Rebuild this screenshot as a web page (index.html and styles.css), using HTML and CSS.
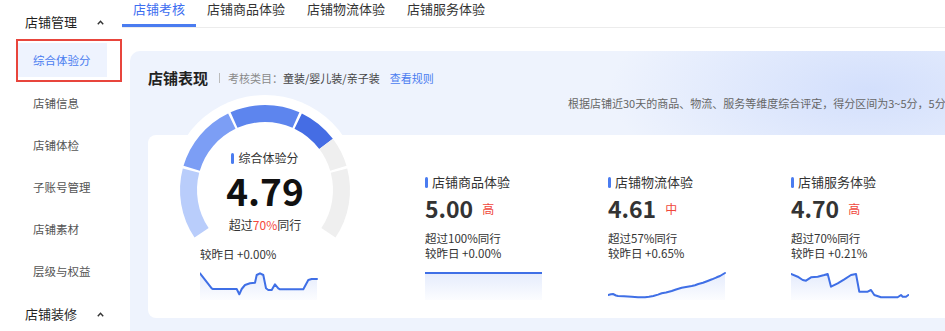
FILE: index.html
```html
<!DOCTYPE html>
<html lang="zh-CN">
<head>
<meta charset="utf-8">
<title>店铺考核</title>
<link rel="stylesheet" href="styles.css">
</head>
<body>
<aside class="sidebar">
  <div class="nav-group">店铺管理<svg class="caret" width="7" height="5" viewBox="0 0 7 5"><path d="M0.8 4.2 L3.5 1.2 L6.2 4.2" fill="none" stroke="#333" stroke-width="1.4"/></svg></div>
  <div class="nav-frame"><div class="nav-item active">综合体验分</div></div>
  <div class="nav-item">店铺信息</div>
  <div class="nav-item">店铺体检</div>
  <div class="nav-item">子账号管理</div>
  <div class="nav-item">店铺素材</div>
  <div class="nav-item">层级与权益</div>
  <div class="nav-group">店铺装修<svg class="caret" width="7" height="5" viewBox="0 0 7 5"><path d="M0.8 4.2 L3.5 1.2 L6.2 4.2" fill="none" stroke="#333" stroke-width="1.4"/></svg></div>
</aside>
<main class="main">
  <nav class="tabs">
    <div class="tab active">店铺考核</div>
    <div class="tab">店铺商品体验</div>
    <div class="tab">店铺物流体验</div>
    <div class="tab">店铺服务体验</div>
  </nav>
  <section class="panel">
    <div class="panel-head">
      <span class="panel-title">店铺表现</span>
      <span class="sep"></span>
      <span class="meta">考核类目：<span class="meta-val">童装/婴儿装/亲子装</span></span>
      <span class="rule-link">查看规则</span>
    </div>
    <div class="desc">根据店铺近30天的商品、物流、服务等维度综合评定，得分区间为3~5分，5分为满分</div>
    <div class="card">
      <div class="gauge-col">
        <div class="gauge-wrap">
          <svg width="190" height="150" viewBox="0 0 190 150">
            <circle cx="95" cy="95" r="95" fill="#fff"/>
            <g fill="none" stroke-width="17">
              <path d="M31.58 137.78 A76.5 76.5 0 0 1 21.0 75.59" stroke="#b9cdfb"/>
              <path d="M21.65 73.27 A76.5 76.5 0 0 1 61.82 26.07" stroke="#7c9ef5"/>
              <path d="M64.01 25.06 A76.5 76.5 0 0 1 125.99 25.06" stroke="#5d85ee"/>
              <path d="M128.18 26.07 A76.5 76.5 0 0 1 156.09 48.96" stroke="#456de4"/>
              <path d="M156.09 48.96 A76.5 76.5 0 0 1 168.35 73.27" stroke="#efefef"/>
              <path d="M169.0 75.59 A76.5 76.5 0 0 1 158.42 137.78" stroke="#efefef"/>
            </g>
          </svg>
          <div class="gauge-text">
            <div class="gauge-label">综合体验分</div>
            <div class="gauge-num">4.79</div>
            <div class="gauge-sub">超过<span class="red">70%</span>同行</div>
          </div>
        </div>
        <div class="gauge-foot">
          <div class="delta">较昨日 +0.00%</div>
          <svg class="spark" width="118" height="32" viewBox="0 0 118 32">
            <defs><linearGradient id="g0" x1="0" y1="0" x2="0" y2="1"><stop offset="0" stop-color="#5b86ee" stop-opacity="0.16"/><stop offset="1" stop-color="#5b86ee" stop-opacity="0.02"/></linearGradient></defs>
            <path d="M0 5.3 L11.7 20.3 L13 21 L36.7 21 L39.3 26.3 L41.7 21 L45 17 L50 15.3 L55 14.7 L56.7 7 L60 5.3 L63.3 7 L66 20.3 L68.3 22 L71.7 22 L75 16.3 L78.3 20.3 L80 21.3 L103.3 21.3 L108.3 12 L111.7 11 L117 11 L117 32 L0 32 Z" fill="url(#g0)"/>
            <path d="M0 5.3 L11.7 20.3 L13 21 L36.7 21 L39.3 26.3 L41.7 21 L45 17 L50 15.3 L55 14.7 L56.7 7 L60 5.3 L63.3 7 L66 20.3 L68.3 22 L71.7 22 L75 16.3 L78.3 20.3 L80 21.3 L103.3 21.3 L108.3 12 L111.7 11 L117 11" fill="none" stroke="#3f6fe6" stroke-width="2" stroke-linejoin="round" stroke-linecap="round"/>
          </svg>
        </div>
      </div>
      <div class="metric">
        <div class="metric-label">店铺商品体验</div>
        <div class="metric-value"><span class="num">5.00</span><span class="level">高</span></div>
        <div class="metric-text">超过100%同行<br>较昨日 +0.00%</div>
        <svg class="spark" width="118" height="32" viewBox="0 0 118 32">
          <defs><linearGradient id="g1" x1="0" y1="0" x2="0" y2="1"><stop offset="0" stop-color="#5b86ee" stop-opacity="0.16"/><stop offset="1" stop-color="#5b86ee" stop-opacity="0.02"/></linearGradient></defs>
          <path d="M0 5 L117 5 L117 32 L0 32 Z" fill="url(#g1)"/>
          <path d="M0 5 L117 5" fill="none" stroke="#3f6fe6" stroke-width="2"/>
        </svg>
      </div>
      <div class="metric">
        <div class="metric-label">店铺物流体验</div>
        <div class="metric-value"><span class="num">4.61</span><span class="level">中</span></div>
        <div class="metric-text">超过57%同行<br>较昨日 +0.65%</div>
        <svg class="spark" width="118" height="32" viewBox="0 0 118 32">
          <defs><linearGradient id="g2" x1="0" y1="0" x2="0" y2="1"><stop offset="0" stop-color="#5b86ee" stop-opacity="0.16"/><stop offset="1" stop-color="#5b86ee" stop-opacity="0.02"/></linearGradient></defs>
          <path d="M0 27 L3 26.2 L5 26 L8 27.5 L10 28 L16 28.3 L23.7 28.7 L30 29.2 L37 29.3 L41 28.8 L45.3 28 L50 26.6 L53.7 25.3 L58 24.5 L63.7 23 L68 21.5 L73.7 19.7 L78 19 L83.7 18 L87 17.2 L90.3 16 L95 14.8 L100.3 12.7 L104 11.3 L108.7 9.3 L112 8 L115.3 6 L117 5 L117 32 L0 32 Z" fill="url(#g2)"/>
          <path d="M0 27 L3 26.2 L5 26 L8 27.5 L10 28 L16 28.3 L23.7 28.7 L30 29.2 L37 29.3 L41 28.8 L45.3 28 L50 26.6 L53.7 25.3 L58 24.5 L63.7 23 L68 21.5 L73.7 19.7 L78 19 L83.7 18 L87 17.2 L90.3 16 L95 14.8 L100.3 12.7 L104 11.3 L108.7 9.3 L112 8 L115.3 6 L117 5" fill="none" stroke="#3f6fe6" stroke-width="2" stroke-linejoin="round" stroke-linecap="round"/>
        </svg>
      </div>
      <div class="metric">
        <div class="metric-label">店铺服务体验</div>
        <div class="metric-value"><span class="num">4.70</span><span class="level">高</span></div>
        <div class="metric-text">超过70%同行<br>较昨日 +0.21%</div>
        <svg class="spark" width="118" height="32" viewBox="0 0 118 32">
          <defs><linearGradient id="g3" x1="0" y1="0" x2="0" y2="1"><stop offset="0" stop-color="#5b86ee" stop-opacity="0.16"/><stop offset="1" stop-color="#5b86ee" stop-opacity="0.02"/></linearGradient></defs>
          <path d="M0 6 L6.7 8.7 L11.7 12 L15 12.7 L20 9.3 L26.7 8.7 L33.3 7 L36.7 6 L40 18.7 L46.7 15.3 L53.3 11.3 L60 7 L65 6 L68.3 23.7 L76.7 23.7 L80 22 L83.3 27 L90 29.3 L106.7 29.3 L110 27 L111.7 28.7 L115 28.7 L117.3 27 L117.3 32 L0 32 Z" fill="url(#g3)"/>
          <path d="M0 6 L6.7 8.7 L11.7 12 L15 12.7 L20 9.3 L26.7 8.7 L33.3 7 L36.7 6 L40 18.7 L46.7 15.3 L53.3 11.3 L60 7 L65 6 L68.3 23.7 L76.7 23.7 L80 22 L83.3 27 L90 29.3 L106.7 29.3 L110 27 L111.7 28.7 L115 28.7 L117.3 27" fill="none" stroke="#3f6fe6" stroke-width="2" stroke-linejoin="round" stroke-linecap="round"/>
        </svg>
      </div>
    </div>
  </section>
</main>
</body>
</html>
```

FILE: styles.css
```css
* { box-sizing: border-box; margin: 0; padding: 0; }

body {
  margin: 0;
  width: 945px;
  height: 331px;
  overflow: hidden;
  background: #fff;
  font-family: "Noto Sans CJK SC", "Noto Sans", sans-serif;
  color: #333;
  display: flex;
}

/* sidebar */
.sidebar { width: 122px; flex: none; }

.nav-group {
  display: flex;
  align-items: center;
  padding: 13px 0 8px 25px;
  font-size: 13px;
  line-height: 18px;
  color: #1f1f1f;
}
.caret { margin-left: 20px; display: block; }

.nav-frame {
  margin-left: 16px;
  width: 106px;
  height: 43px;
  border: 2px solid #e8453c;
  padding-top: 2px;
}

.nav-item {
  height: 42px;
  line-height: 42px;
  padding-left: 33px;
  font-size: 11.5px;
  color: #555;
}
.nav-item.active {
  width: 89px;
  height: 34px;
  line-height: 34px;
  padding-left: 15px;
  background: #eef3fe;
  color: #4a7cf0;
}

/* main */
.main { flex: 1; min-width: 0; overflow: hidden; }

.tabs {
  display: flex;
  height: 28px;
  padding-top: 1px;
  border-bottom: 1px solid #ececec;
}
.tab {
  padding: 0 11px 7px;
  font-size: 13px;
  line-height: 16px;
  color: #333;
  border-bottom: 3px solid transparent;
}
.tab.active { color: #3d6ef0; border-bottom-color: #4a7cf0; }

.panel {
  margin: 23px 0 0 8px;
  width: 1000px;
  height: 290px;
  border-radius: 10px 0 0 0;
  padding: 17px 18px 0;
  background:
    radial-gradient(ellipse 260px 110px at 740px 40px, rgba(208, 221, 252, 0.9), rgba(208, 221, 252, 0)),
    #eef3fd;
}

.panel-head { display: flex; align-items: center; height: 20px; }
.panel-title { font-size: 15px; font-weight: 700; color: #222; line-height: 20px; }
.sep { width: 1px; height: 10px; background: #bbb; margin: 0 8px 0 11px; }
.meta { font-size: 11px; color: #8a8a8a; line-height: 16px; }
.meta-val { color: #444; }
.rule-link { font-size: 11px; color: #4a7cf0; margin-left: 10px; line-height: 16px; }

.desc {
  margin: 8px 0 0 420px;
  font-size: 11px;
  line-height: 14px;
  color: #666;
  white-space: nowrap;
}

.card {
  margin-top: 25px;
  height: 183px;
  background: #fff;
  border-radius: 8px;
  display: flex;
}

.gauge-col { width: 277px; flex: none; }
.gauge-wrap {
  position: relative;
  width: 190px;
  height: 150px;
  margin: -40px 0 0 22px;
}
.gauge-wrap svg { display: block; }
.gauge-text {
  position: absolute;
  left: 0;
  right: 0;
  top: 54px;
  display: flex;
  flex-direction: column;
  align-items: center;
}
.gauge-label {
  display: flex;
  align-items: center;
  font-size: 12px;
  line-height: 18px;
  color: #333;
}
.gauge-label::before {
  content: "";
  width: 3px;
  height: 11px;
  border-radius: 2px;
  background: #4a7cf0;
  margin-right: 4px;
}
.gauge-num {
  margin-top: 6px;
  font-size: 37px;
  font-weight: 700;
  line-height: 34px;
  color: #111;
}
.gauge-sub { margin-top: 10px; font-size: 12px; line-height: 16px; color: #333; }
.red { color: #f5483b; }

.gauge-foot { margin-left: 52px; }
.delta { margin-top: 1px; font-size: 11.5px; line-height: 16px; color: #333; }
.spark { display: block; margin-top: 6px; }

.metric { width: 183px; flex: none; padding-top: 38px; }
.metric-label {
  display: flex;
  align-items: center;
  font-size: 13px;
  line-height: 18px;
  color: #333;
}
.metric-label::before {
  content: "";
  width: 3px;
  height: 11px;
  border-radius: 2px;
  background: #4a7cf0;
  margin-right: 4px;
}
.metric-value { display: flex; align-items: center; height: 28px; margin-top: 3px; }
.num { font-size: 23px; font-weight: 700; line-height: 28px; color: #333; }
.level { font-size: 12px; color: #f0473c; margin-left: 9px; }
.metric-text { margin-top: 9px; font-size: 11.5px; line-height: 15px; color: #333; }
.metric .spark { margin-top: 7px; }
```
